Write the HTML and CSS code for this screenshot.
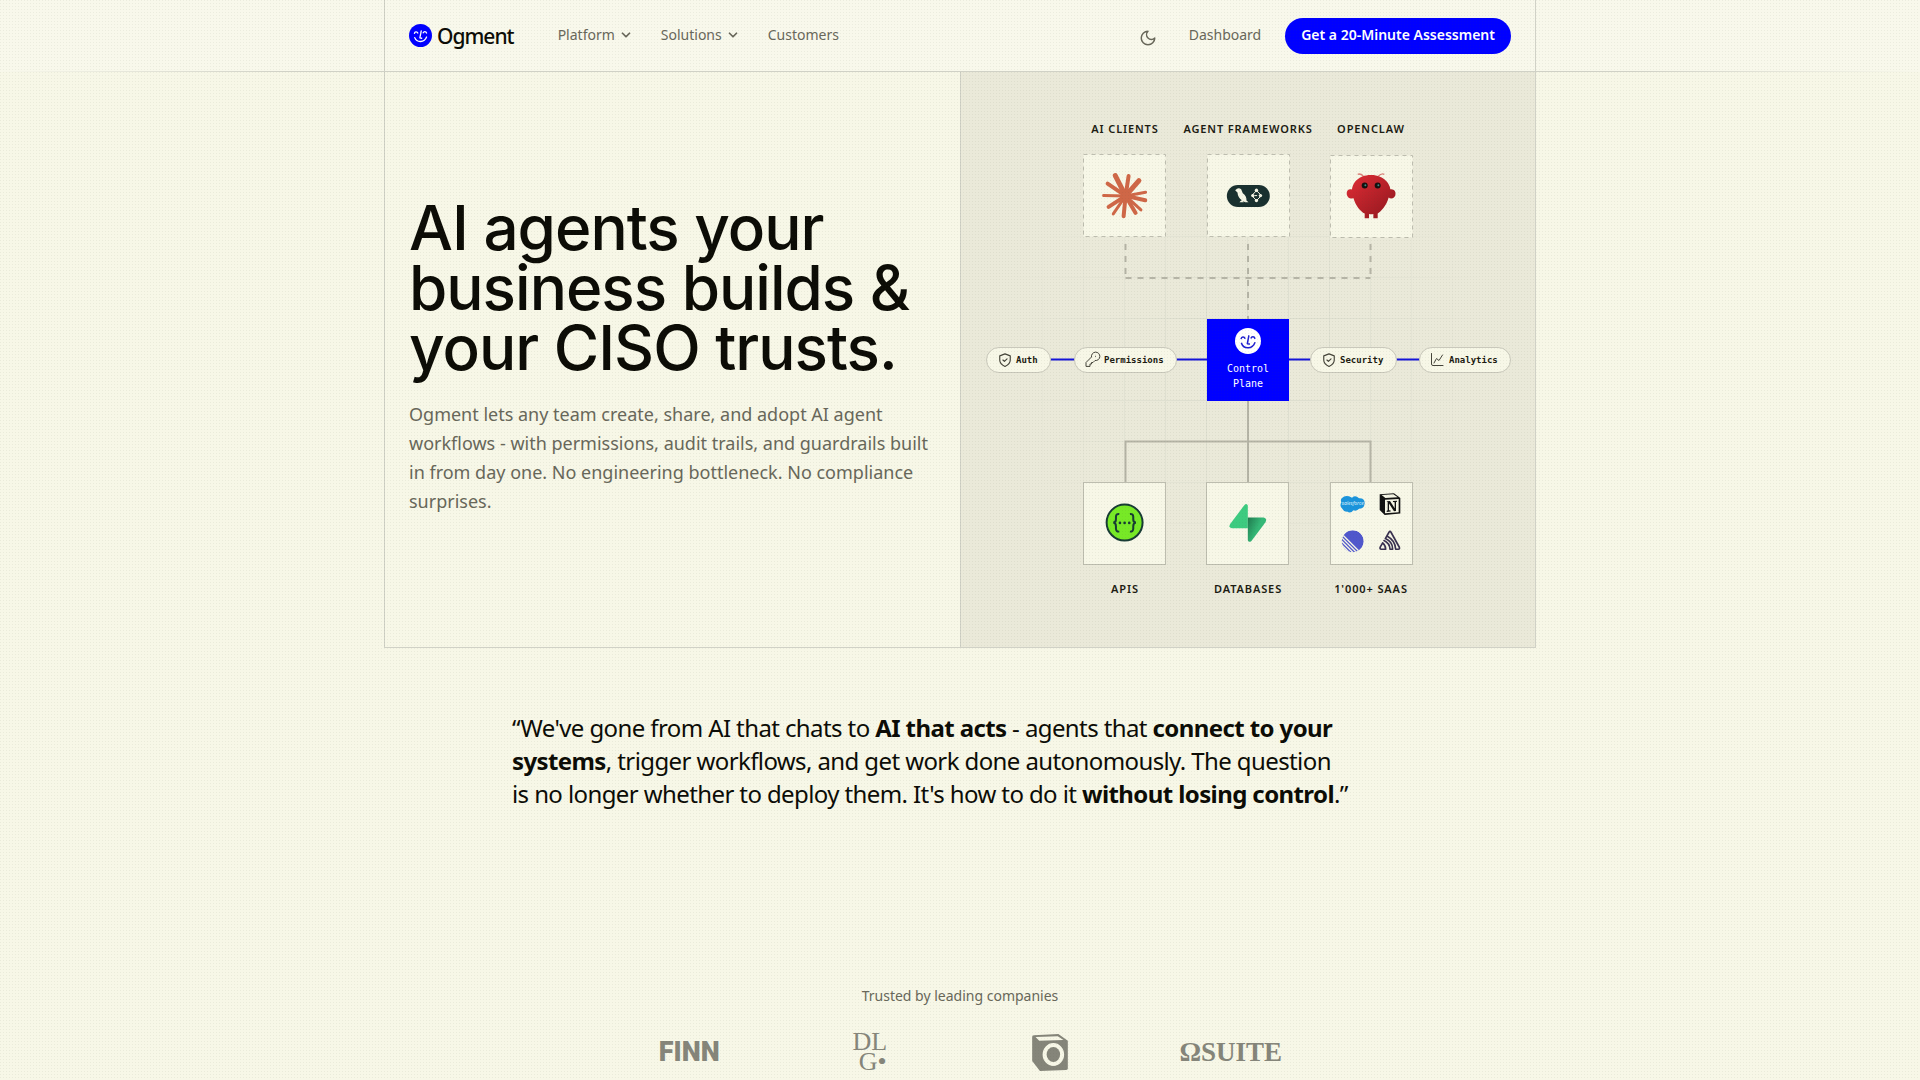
FILE: index.html
```html
<!DOCTYPE html>
<html lang="en">
<head>
<meta charset="utf-8">
<meta name="viewport" content="width=device-width, initial-scale=1">
<title>Ogment</title>
<link rel="stylesheet" href="styles.css">
</head>
<body>
<svg class="defs" width="0" height="0" aria-hidden="true">
  <symbol id="face" viewBox="-19 -19 38 38">
    <g fill="none" stroke="currentColor" stroke-width="2.2" stroke-linecap="round" stroke-linejoin="round">
      <path d="M-10-3.500C-9.500-6.500-5.500-7-4.500-4M4.500-4.500C5.500-7 9-7 10-4M1.200-7.500L-1 4L2 4.500M-9.500 3.500C-6 12.500 6.500 12 10 2.500"/>
    </g>
  </symbol>
  <symbol id="chevron" viewBox="0 0 24 24">
    <path d="M6 9l6 6 6-6" fill="none" stroke="currentColor" stroke-width="3" stroke-linecap="round" stroke-linejoin="round"/>
  </symbol>
  <symbol id="shield" viewBox="0 0 24 24">
    <path d="M12 1.500L21 5v7c0 6-4.500 9-9 11c-4.500-2-9-5-9-11V5zM8.500 12l2.500 2.500 4.500-4.500" fill="none" stroke="currentColor" stroke-width="2" stroke-linejoin="round" stroke-linecap="round"/>
  </symbol>
</svg>

<header class="site-header">
  <div class="frame header-inner">
    <a class="brand" href="#">
      <svg class="brand-mark" viewBox="0 0 38 38" aria-hidden="true"><circle cx="19" cy="19" r="19"/><use href="#face" width="38" height="38"/></svg>
      <span>Ogment</span>
    </a>
    <nav class="nav" aria-label="Main">
      <button class="nav-link" type="button">Platform <svg class="chevron" aria-hidden="true"><use href="#chevron"/></svg></button>
      <button class="nav-link" type="button">Solutions <svg class="chevron" aria-hidden="true"><use href="#chevron"/></svg></button>
      <a class="nav-link" href="#">Customers</a>
    </nav>
    <div class="actions">
      <button class="theme" type="button" aria-label="Toggle theme">
        <svg viewBox="0 0 24 24" aria-hidden="true"><path d="M12 3a6 6 0 0 0 9 9 9 9 0 1 1-9-9z" fill="none" stroke="currentColor" stroke-width="2" stroke-linecap="round" stroke-linejoin="round"/></svg>
      </button>
      <a class="nav-link" href="#">Dashboard</a>
      <a class="cta" href="#">Get a 20-Minute Assessment</a>
    </div>
  </div>
</header>

<main>
  <section class="frame hero">
    <div class="hero-copy">
      <h1>AI agents your business builds &amp; your CISO trusts.</h1>
      <p>Ogment lets any team create, share, and adopt AI agent workflows - with permissions, audit trails, and guardrails built in from day one. No engineering bottleneck. No compliance surprises.</p>
    </div>
    <div class="hero-diagram">
      <svg viewBox="0 0 575 575" role="img" aria-label="Ogment control plane diagram">
        <defs>
          <pattern id="cells" width="41" height="41" patternUnits="userSpaceOnUse"><path d="M0 0.500H41M0.500 0V41" stroke="#dddecf" fill="none"/></pattern>
          <radialGradient id="fade"><stop offset="0.300" stop-color="#fff"/><stop offset="1" stop-color="#fff" stop-opacity="0"/></radialGradient>
          <mask id="fade-mask"><ellipse cx="288" cy="288" rx="250" ry="230" fill="url(#fade)"/></mask>
          <linearGradient id="claw" x1="0" y1="0" x2="1" y2="1"><stop offset="0" stop-color="#e22d36"/><stop offset="1" stop-color="#8e161d"/></linearGradient>
          <linearGradient id="bolt" x1="0" y1="0" x2="1" y2="0.600"><stop offset="0" stop-color="#1f7a4e"/><stop offset="0.600" stop-color="#35b877"/></linearGradient>
          <clipPath id="disc"><circle cx="879" cy="244" r="33"/></clipPath>
        </defs>
        <rect width="575" height="575" fill="url(#cells)" mask="url(#fade-mask)"/>

        <g class="label">
          <text x="165" y="61">AI CLIENTS</text>
          <text x="288" y="61">AGENT FRAMEWORKS</text>
          <text x="411" y="61">OPENCLAW</text>
          <text x="165" y="521">APIS</text>
          <text x="288" y="521">DATABASES</text>
          <text x="411" y="521">1'000+ SAAS</text>
        </g>

        <g class="wire dashed">
          <path d="M165.500 172V206M410.500 172V206M165.500 206H410.500M288 172V247"/>
        </g>
        <g class="wire"><path d="M288 328V411M165.500 411V369.500H410.500V411"/></g>
        <path class="bus" d="M90 287.500H247M329 287.500H460"/>

        <g class="card dashed-card">
          <rect x="123.500" y="82.500" width="82" height="82"/>
          <rect x="247.500" y="82.500" width="82" height="82"/>
          <rect x="370.500" y="83.500" width="82" height="82"/>
        </g>
        <g class="card">
          <rect x="123.500" y="410.500" width="82" height="82"/>
          <rect x="246.500" y="410.500" width="82" height="82"/>
          <rect x="370.500" y="410.500" width="82" height="82"/>
        </g>

        <!-- clients, frameworks, claw -->
        <g transform="translate(100 38) scale(0.333)">
          <g stroke="#cf6747" stroke-linecap="round" fill="none">
            <path stroke-width="15" d="M197 258L166 197M197 258L237 212"/>
            <path stroke-width="12" d="M197 258L206 198M197 258L143 221M197 258L256 271M197 258L191 319M197 258L146 291M197 258L227 309"/>
            <path stroke-width="9" d="M197 258L257 247M197 258L131 257M197 258L243 300M197 258L160 312"/>
            <circle cx="198" cy="258" r="14" fill="#cf6747"/>
          </g>
          <rect x="501" y="225" width="129" height="66" rx="33" fill="#19302f"/>
          <path fill="#f6f6e6" d="M526 241Q535 231 544 238L549 250Q561 259 560 272L566 277H556L549 273L552 277H539Q542 273 546 271Q534 263 533 248Z"/>
          <path d="M576 257L590 242L605 257L590 272ZM584 257H592" fill="none" stroke="#f6f6e6" stroke-width="3"/>
          <g fill="#f6f6e6"><circle cx="590" cy="241" r="5"/><circle cx="579" cy="257" r="5"/><circle cx="602" cy="257" r="5"/><circle cx="590" cy="272" r="5"/></g>
          <path d="M911 199Q903 190 894 193M956 199Q965 189 974 193" fill="none" stroke="#d98079" stroke-width="4"/>
          <path fill="url(#claw)" d="M934 195C976 195 992 226 992 238C1003 236 1010 245 1007 256C1003 267 993 268 987 263C980 288 965 304 954 311V325H941V312Q934 314 928 312V325H915V311C902 304 888 288 881 264C873 269 863 264 861 253C860 242 867 236 877 239C878 222 893 195 934 195Z"/>
          <circle cx="915" cy="227" r="9" fill="#15100f"/><circle cx="954" cy="227" r="9" fill="#15100f"/>
          <circle cx="917" cy="226" r="3" fill="#3e8a85"/><circle cx="956" cy="226" r="3" fill="#3e8a85"/>
        </g>

        <!-- control plane -->
        <rect x="247" y="247" width="82" height="82" fill="#0000ff"/>
        <circle cx="288" cy="269" r="13" fill="#fff"/>
        <use class="plane-face" href="#face" x="275" y="256" width="26" height="26"/>
        <g class="plane-text"><text x="288" y="300">Control</text><text x="288" y="315">Plane</text></g>

        <g class="pill">
          <rect x="26.500" y="275.500" width="64" height="25" rx="12.500"/>
          <rect x="114.500" y="275.500" width="102" height="25" rx="12.500"/>
          <rect x="350.500" y="275.500" width="86" height="25" rx="12.500"/>
          <rect x="459.500" y="275.500" width="91" height="25" rx="12.500"/>
          <text x="56" y="291">Auth</text>
          <text x="144" y="291">Permissions</text>
          <text x="380" y="291">Security</text>
          <text x="489" y="291">Analytics</text>
        </g>
        <g class="pill-icon">
          <use href="#shield" x="38" y="281" width="14" height="14"/>
          <use href="#shield" x="362" y="281" width="14" height="14"/>
          <path d="M126 294V290.500L131.500 285A4.200 4.200 0 1 1 135 288.500L133 290.500H131.500V292H130V294ZM135.500 284.300h0.100"/>
          <path d="M471.500 281.500V292Q471.500 293.500 473 293.500H483M474 291L476.500 286.500L479 288.500L482.500 283"/>
        </g>

        <!-- apis, databases, saas -->
        <g transform="translate(100 388) scale(0.333)">
          <circle cx="194" cy="188" r="54" fill="#77e926" stroke="#173b34" stroke-width="6"/>
          <path d="M178 162Q168 161 168 171V178Q168 188 160 188Q168 189 168 199V206Q168 216 178 215M210 162Q220 161 220 171V178Q220 188 228 188Q220 189 220 199V206Q220 216 210 215" fill="none" stroke="#173b34" stroke-width="6"/>
          <g fill="#173b34"><circle cx="180" cy="189" r="4"/><circle cx="194" cy="189" r="4"/><circle cx="208" cy="189" r="4"/></g>
          <path fill="#3dcb80" d="M564 137V205H516Q505 203 511 192L554 135Q561 129 564 137Z"/>
          <path fill="url(#bolt)" d="M564 173H612Q623 176 617 187L575 243Q567 249 564 241Z"/>
          <path fill="#1b94dc" d="M847 114Q855 105 868 109L877 113Q887 104 898 115Q915 114 915 130Q913 147 899 146Q891 155 881 151Q873 162 862 155Q852 156 849 148Q838 139 845 127Q841 119 847 114Z"/>
          <text class="cloud-text" x="879" y="136">salesforce</text>
          <path d="M960 103L1003 100L1022 114V161L975 165L960 150Z" fill="#111"/>
          <path d="M966 105L1001 103L1014 112L977 114Z" fill="#f6f6e6"/><path d="M976 119L1017 117V157L976 160Z" fill="#f6f6e6"/>
          <path d="M981 124L991 123L1005 145V127L1000 126V123L1012 122V125L1009 126V153L1003 154L988 131V151L993 152V155L981 156V153L984 151V127Z" fill="#111"/>
          <g clip-path="url(#disc)"><circle cx="879" cy="244" r="33" fill="#5057cc"/><path d="M840 216L910 286M840 227L900 287M840 238L890 288M840 249L880 289" stroke="#f6f6e6" stroke-width="4"/></g>
          <g fill="none" stroke="#39304f" stroke-width="5" stroke-linejoin="round" stroke-linecap="round"><path d="M977 236L988 217Q991 212 994 217L1019 262Q1021 268 1016 268H1008Q1007 242 983 229M969 249L962 261Q959 268 965 268H978Q978 257 969 249ZM973 242Q990 250 991 268H999Q999 245 977 236"/></g>
        </g>
      </svg>
    </div>
  </section>

  <section class="quote">
    <blockquote>“We've gone from AI that chats to <strong>AI that acts</strong> - agents that <strong>connect to your systems</strong>, trigger workflows, and get work done autonomously. The question is no longer whether to deploy them. It's how to do it <strong>without losing control</strong>.”</blockquote>
  </section>

  <section class="trusted">
    <p>Trusted by leading companies</p>
    <ul class="logos">
      <li class="logo-finn">FINN</li>
      <li class="logo-dlg"><span>DL</span><span class="dlg-second">G•</span></li>
      <li><svg class="cube" viewBox="0 0 106 110" aria-label="O"><path fill="currentColor" fill-rule="evenodd" d="M5 4L78 0L106 20V103Q106 106 101 107L23 110L3 84Q0 82 0 79V8Q0 5 5 4ZM10 9L21 20L93 18L76 7ZM63 27A32 34 0 1 0 63 95A32 34 0 1 0 63 27Z"/><ellipse cx="63" cy="61" rx="20" ry="22" fill="currentColor"/></svg></li>
      <li class="logo-suite">ΩSUITE</li>
    </ul>
  </section>
</main>
</body>
</html>
```
FILE: styles.css
```css
* { box-sizing: border-box; margin: 0; padding: 0; }

:root {
  --bg: #f7f7e7;
  --panel: #eae9d9;
  --line: #d0d1c6;
  --ink: #0c0c06;
  --muted: #68675a;
  --blue: #0000ff;
}

body {
  position: relative;
  min-height: 100vh;
  background: var(--bg);
  color: var(--ink);
  font-family: "Noto Sans", "Liberation Sans", sans-serif;
  font-size: 14px;
  line-height: 20px;
}

/* fine dot texture over the whole page */
body::after {
  content: "";
  position: absolute;
  inset: 0;
  pointer-events: none;
  background: linear-gradient(90deg, rgba(80, 90, 60, 0.07) 1px, transparent 1px) 0 0 / 3px 3px;
  mask: linear-gradient(#000 1px, transparent 1px) 0 0 / 3px 3px;
}

.defs { display: block; height: 0; }
a { color: inherit; text-decoration: none; }
button { font: inherit; color: inherit; background: none; border: 0; cursor: pointer; }

.frame {
  max-width: 1152px;
  margin: 0 auto;
  border: 0 solid var(--line);
  border-width: 0 1px;
}

.site-header {
  background: #f8f8eb;
  border-bottom: 1px solid;
  border-image: linear-gradient(90deg, transparent, var(--line) 15%, var(--line) 85%, transparent) 1;
}
.header-inner {
  display: flex;
  align-items: center;
  height: 71px;
  padding: 0 24px;
}
.brand {
  display: flex;
  align-items: center;
  gap: 5px;
  margin-right: 44px;
  font-size: 21px;
  font-weight: 500;
  line-height: 28px;
  letter-spacing: -1px;
}
.brand-mark { width: 23px; height: 23px; fill: var(--blue); color: #fff; }
.nav { display: flex; gap: 28px; }
.nav-link {
  display: flex;
  align-items: center;
  gap: 4px;
  padding-bottom: 2px;
  color: var(--muted);
}
.chevron { width: 14px; height: 14px; }
.actions {
  display: flex;
  align-items: center;
  gap: 24px;
  margin-left: auto;
}
.theme { display: flex; padding: 4px 8px 0; color: var(--muted); }
.theme svg { width: 18px; height: 18px; }
.cta {
  padding: 7px 16px 9px;
  border-radius: 18px;
  background: var(--blue);
  color: #fff;
  font-weight: 600;
}

.hero {
  display: grid;
  grid-template-columns: 1fr 1fr;
  border-bottom-width: 1px;
}
.hero-copy {
  display: flex;
  flex-direction: column;
  justify-content: center;
  gap: 22px;
  padding: 0 24px 6px;
}
.hero h1 {
  font-family: Inter, "Liberation Sans", sans-serif;
  font-size: 62px;
  font-weight: 500;
  line-height: 60px;
  letter-spacing: -1px;
}
.hero p { font-size: 18px; line-height: 29px; color: var(--muted); }
.hero-diagram {
  background: var(--panel);
  box-shadow: inset 1px 0 var(--line);
}
.hero-diagram svg { display: block; width: 100%; }

.label { font-size: 11px; font-weight: 600; letter-spacing: 0.08em; text-anchor: middle; fill: #1c1b12; }
.wire { fill: none; stroke: #b5b4a6; stroke-width: 2; }
.dashed { stroke-dasharray: 6 6; }
.bus { stroke: #1414d8; stroke-width: 2; }
.card rect { fill: #f7f7e7; stroke: #bdbdaf; }
.dashed-card rect { stroke-dasharray: 4 4; }
.plane-face { color: #2020d0; }
.plane-text, .pill { font-family: "DejaVu Sans Mono", "Liberation Mono", monospace; }
.plane-text { font-size: 10px; fill: #fff; text-anchor: middle; }
.pill { font-size: 9px; font-weight: 700; fill: #1c1b12; }
.pill rect { fill: #f7f7e7; stroke: #c9c8bb; }
.pill-icon { color: #45443a; stroke: #45443a; fill: none; stroke-linejoin: round; stroke-linecap: round; }
.cloud-text { font-size: 15px; font-style: italic; fill: #d8eefa; text-anchor: middle; }

.quote { max-width: 896px; margin: 0 auto; padding: 63px 0 96px; }
.quote blockquote {
  font-size: 24px;
  line-height: 33px;
  letter-spacing: -0.025em;
  text-wrap: balance;
}
.quote strong { font-weight: 700; }

.trusted { padding: 80px 0 10px; text-align: center; }
.trusted p { color: var(--muted); }
.logos {
  display: grid;
  grid-template-columns: repeat(4, 1fr);
  place-items: center;
  max-width: 722px;
  height: 38px;
  margin: 26px auto 0;
  list-style: none;
  color: #85857a;
}
.logo-finn { font: 900 27px/38px Roboto, sans-serif; }
.logo-suite { font: 700 27px/38px "Liberation Serif", serif; }
.logo-dlg { display: flex; flex-direction: column; font: 400 26px/20px "Liberation Serif", serif; }
.dlg-second { padding-left: 6px; }
.cube { display: block; width: 36px; height: 37px; }
```
